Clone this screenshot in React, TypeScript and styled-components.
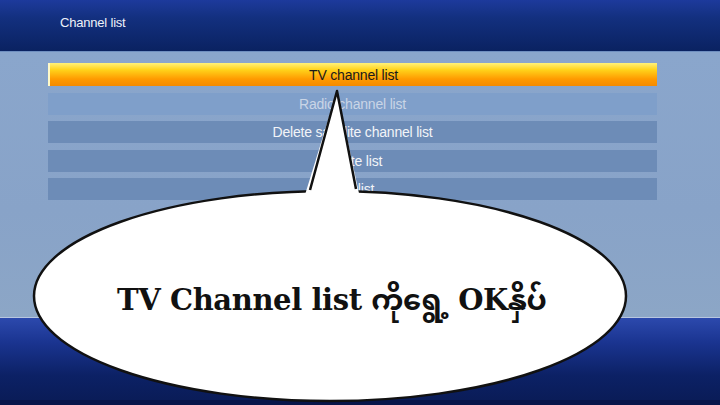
import React from "react";
import styled, { createGlobalStyle } from "styled-components";

const Global = createGlobalStyle`
  html, body { margin: 0; padding: 0; }
  body { width: 720px; height: 405px; overflow: hidden; background: #0b1e5c; }
`;

const Screen = styled.div`
  position: relative;
  width: 720px;
  height: 405px;
  display: flex;
  flex-direction: column;
  font-family: "Liberation Sans", Arial, sans-serif;
`;

const Header = styled.header`
  height: 52px;
  flex: none;
  background: linear-gradient(180deg, #1d3a9c 0%, #13307f 35%, #0a2261 100%);
  display: flex;
  align-items: flex-start;
  padding: 15px 0 0 60px;
  box-sizing: border-box;
  border-bottom: 1px solid #6f8fc0;
`;

const Title = styled.h1`
  margin: 0;
  color: #eef2fa;
  font-size: 13px;
  font-weight: normal;
  letter-spacing: -0.2px;
`;

const Body = styled.main`
  height: 265px;
  flex: none;
  background: linear-gradient(180deg, #8aa6cc 0%, #88a3c8 60%, #8ca6c6 100%);
  padding: 11px 0 0 48px;
  box-sizing: border-box;
`;

const List = styled.div`
  width: 609px;
  display: flex;
  flex-direction: column;
  gap: 6.5px;
`;

const Row = styled.div<{ $kind: "active" | "light" | "dark" }>`
  height: ${(p) => (p.$kind === "active" ? 23 : 22)}px;
  display: flex;
  align-items: center;
  justify-content: center;
  font-size: 14px;
  letter-spacing: -0.2px;
  color: ${(p) => (p.$kind === "active" ? "#1a1a1a" : p.$kind === "light" ? "#c9d5e6" : "#f2f4f8")};
  background: ${(p) =>
    p.$kind === "active"
      ? "linear-gradient(180deg, #fff27a 0%, #ffd21a 30%, #ff9a00 70%, #f58a00 100%)"
      : p.$kind === "light"
      ? "#7f9fca"
      : "#6d8cb7"};
  border-left: ${(p) => (p.$kind === "active" ? "2px solid #fff9c8" : "none")};
`;

const Footer = styled.footer`
  flex: 1;
  background: linear-gradient(180deg, #2c49ad 0%, #1a3490 30%, #0c2165 70%, #0a1c58 100%);
  border-top: 1px solid #b7c6e0;
  border-bottom: 5px solid #07154a;
`;

const Bubble = styled.div`
  position: absolute;
  left: 0;
  top: 0;
  width: 720px;
  height: 405px;
  pointer-events: none;
`;

const BubbleSvg = styled.svg`
  position: absolute;
  left: 0;
  top: 0;
`;

const BubbleText = styled.div`
  position: absolute;
  left: 117px;
  top: 272px;
  font-family: "DejaVu Serif", "Liberation Serif", "Noto Sans Myanmar", "Padauk", serif;
  font-weight: bold;
  font-size: 29px;
  color: #111;
  white-space: nowrap;
  letter-spacing: -0.4px;
`;

export default function App() {
  return (
    <>
      <Global />
      <Screen>
        <Header>
          <Title>Channel list</Title>
        </Header>
        <Body>
          <List>
            <Row $kind="active">TV channel list</Row>
            <Row $kind="light">Radio channel list</Row>
            <Row $kind="dark">Delete satellite channel list</Row>
            <Row $kind="dark">Delete list</Row>
            <Row $kind="dark">Edit list</Row>
          </List>
        </Body>
        <Footer />
        <Bubble>
          <BubbleSvg width="720" height="405" viewBox="0 0 720 405">
            <ellipse cx="330" cy="296" rx="296" ry="105" fill="#fff" stroke="#111" strokeWidth="2.5" />
            <path d="M304 198 L337 91 L360 198 Z" fill="#fff" stroke="none" />
            <path d="M310 190 L337 91 L356 189" fill="none" stroke="#111" strokeWidth="2.5" strokeLinejoin="round" />
          </BubbleSvg>
          <BubbleText>TV Channel list ကိုရွေ့ OKနှိပ်</BubbleText>
        </Bubble>
      </Screen>
    </>
  );
}
